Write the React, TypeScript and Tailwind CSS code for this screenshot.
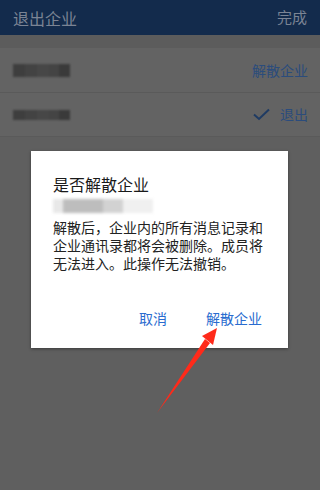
import React from "react";

const font = { fontFamily: '"Noto Sans CJK SC", "Noto Sans", sans-serif' };

function Blur({ className }: { className: string }) {
  return (
    <div className={`flex overflow-hidden blur-[1px] ${className}`}>
      <div className="w-[12px] bg-[#3e3e3e]" />
      <div className="w-[12px] bg-[#434343]" />
      <div className="w-[12px] bg-[#474747]" />
      <div className="w-[10px] bg-[#444444]" />
      <div className="w-[11px] bg-[#3a3a3a]" />
    </div>
  );
}

export default function App() {
  return (
    <div className="relative h-[490px] w-[320px] overflow-hidden bg-[#5f5f5f]" style={font}>
      {/* dimmed page */}
      <div className="flex h-[35px] items-center justify-between bg-[#132b4c] px-[13px] text-[#7b8494]">
        <span className="text-[16px]">退出企业</span>
        <span className="text-[15px]">完成</span>
      </div>
      <div className="h-[13px] bg-[#5c5c5c]" />
      <div className="flex h-[45px] items-center justify-between border-b border-[#5a5a5a] bg-[#636363] pl-[13px] pr-[12px]">
        <Blur className="h-[13px] w-[57px]" />
        <span className="text-[14px] text-[#2b4c7c]">解散企业</span>
      </div>
      <div className="flex h-[44px] items-center justify-between border-b border-[#5a5a5a] bg-[#636363] pl-[13px] pr-[12px]">
        <Blur className="h-[10px] w-[57px]" />
        <div className="flex items-center gap-[10px]">
          <svg width="17" height="13" viewBox="0 0 17 13" fill="none">
            <path d="M1 6.5 L6 11 L16 1.5" stroke="#1f3b63" strokeWidth="2" />
          </svg>
          <span className="text-[14px] text-[#2b4c7c]">退出</span>
        </div>
      </div>

      {/* dialog */}
      <div className="absolute left-[31px] top-[151px] w-[257px] bg-white pb-[19px] pl-[22px] pr-[18px] pt-[22px] shadow-[0_1px_3px_rgba(0,0,0,0.4)]">
        <div className="text-[16px] leading-[22px] text-[#1a1a1a]">是否解散企业</div>
        <div className="mt-[4px] flex h-[14px] w-[100px] overflow-hidden blur-[1.5px]">
          <div className="w-[10px] bg-[#e8e8e8]" />
          <div className="w-[40px] bg-[#bdbdbd]" />
          <div className="w-[20px] bg-[#d2d2d2]" />
          <div className="w-[30px] bg-[#f0f0f0]" />
        </div>
        <p className="mt-[5px] text-[14px] leading-[18px] text-[#222]">
          解散后，企业内的所有消息记录和企业通讯录都将会被删除。成员将无法进入。此操作无法撤销。
        </p>
        <div className="mt-[36px] flex justify-end gap-[39px] pr-[8px] text-[14px] text-[#2a6ccf]">
          <span>取消</span>
          <span>解散企业</span>
        </div>
      </div>

      {/* red arrow */}
      <svg className="absolute left-0 top-0" width="320" height="490" viewBox="0 0 320 490">
        <path d="M157 413 L205 339 L210 343 Z" fill="#ff2a1a" />
        <path d="M217 328 L202 336 L213 345 Z" fill="#ff2a1a" />
      </svg>
    </div>
  );
}
